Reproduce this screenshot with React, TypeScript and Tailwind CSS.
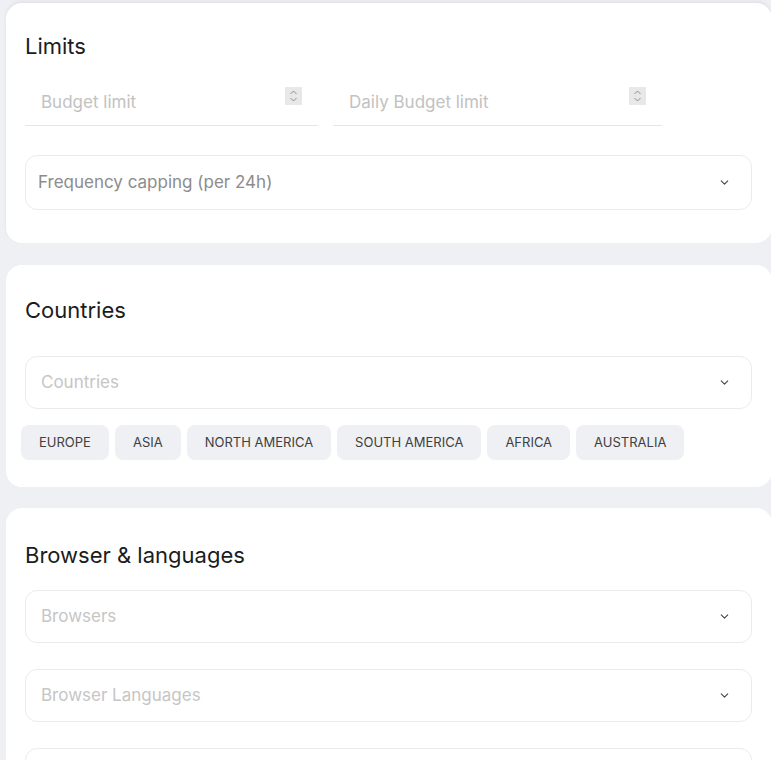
import { ChevronDown } from "lucide-react";

const font = { fontFamily: "Inter, 'Noto Sans', sans-serif" };

const Spinner = () => (
  <div className="w-[17px] h-[18px] bg-[#e8e8e8] flex flex-col items-center justify-center">
    <svg width="9" height="14" viewBox="0 0 9 14" fill="none" stroke="#8f8f8f" strokeWidth="1">
      <path d="M1.5 5 L4.5 2 L7.5 5" />
      <path d="M1.5 9 L4.5 12 L7.5 9" />
    </svg>
  </div>
);

const NumberField = ({ label, width }: { label: string; width: string }) => (
  <div className={`${width} h-[47px] border-b border-[#e6e6e6] flex items-start justify-between pl-4 pr-4`}>
    <span className="text-[17px] text-[#c2c2c2] mt-[11px]">{label}</span>
    <div className="mt-[8px]">
      <Spinner />
    </div>
  </div>
);

const Select = ({ label, dark, h = "h-[53px]", px = "pl-[15px]" }: { label?: string; dark?: boolean; h?: string; px?: string }) => (
  <div className={`${h} border border-[#ebebeb] rounded-[12px] flex items-center justify-between ${px} pr-[20px]`}>
    <span className={`text-[17px] ${dark ? "text-[#8c8c8c]" : "text-[#c6c6c6]"}`}>{label}</span>
    <ChevronDown size={13} strokeWidth={2} className="text-[#444]" />
  </div>
);

const regions = ["EUROPE", "ASIA", "NORTH AMERICA", "SOUTH AMERICA", "AFRICA", "AUSTRALIA"];

export default function App() {
  return (
    <div style={font} className="bg-[#eef0f4] w-[771px] h-[760px] overflow-hidden pt-[3px] pl-[6px]">
      <div className="w-[766px] bg-white rounded-[16px] shadow-[0_-2px_4px_rgba(0,0,0,0.06)] pl-[19px] pr-[20px] pt-[29px] pb-[33px]">
        <h2 className="text-[22px] leading-[28px] text-[#1c1c1c]">Limits</h2>
        <div className="flex gap-[15px] mt-[19px]">
          <NumberField label="Budget limit" width="w-[293px]" />
          <NumberField label="Daily Budget limit" width="w-[329px]" />
        </div>
        <div className="mt-[29px]">
          <Select label="Frequency capping (per 24h)" dark h="h-[55px]" px="pl-[12px]" />
        </div>
      </div>

      <div className="w-[766px] bg-white rounded-[16px] mt-[22px] pl-[19px] pr-[20px] pt-[31px] pb-[27px]">
        <h2 className="text-[22px] leading-[28px] text-[#1c1c1c]">Countries</h2>
        <div className="mt-[32px]">
          <Select label="Countries" />
        </div>
        <div className="flex gap-[6px] mt-[16px] -ml-[4px]">
          {regions.map((r) => (
            <div key={r} className="h-[35px] px-[18px] rounded-[8px] bg-[#eef0f4] flex items-center text-[13px] text-[#3f3f3f]">
              {r}
            </div>
          ))}
        </div>
      </div>

      <div className="w-[766px] bg-white rounded-[16px] mt-[21px] pl-[19px] pr-[20px] pt-[33px] pb-[40px]">
        <h2 className="text-[22px] leading-[28px] text-[#1c1c1c]">Browser &amp; languages</h2>
        <div className="mt-[21px] flex flex-col gap-[26px]">
          <Select label="Browsers" />
          <Select label="Browser Languages" />
          <Select />
        </div>
      </div>
    </div>
  );
}
